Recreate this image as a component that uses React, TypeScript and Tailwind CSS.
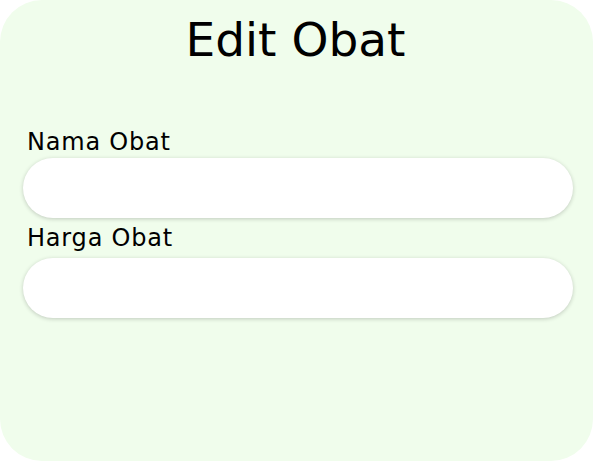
import React from "react";

export default function App() {
  return (
    <div className="w-[593px] h-[461px] bg-white" style={{ fontFamily: "'DejaVu Sans', sans-serif" }}>
      <div className="w-full h-full rounded-[42px] bg-[#f0fdec] px-[23px] pt-[14px]">
        {/* Judul */}
        <h1 className="text-center text-[47px] leading-[52px] font-normal text-black pr-[2px]">Edit Obat</h1>

        <form className="mt-[62px] flex flex-col">
          <label className="px-[4px] text-[24px] leading-[28px] tracking-[0.8px] text-black">Nama Obat</label>
          <input
            type="text"
            className="mt-[2px] h-[60px] w-[550px] rounded-full bg-white shadow-[0_1px_4px_rgba(0,0,0,0.2)] outline-none px-6"
          />
          <label className="mt-[6px] px-[4px] text-[24px] leading-[28px] tracking-[0.8px] text-black">Harga Obat</label>
          <input
            type="text"
            className="mt-[6px] h-[60px] w-[550px] rounded-full bg-white shadow-[0_1px_4px_rgba(0,0,0,0.2)] outline-none px-6"
          />
        </form>
      </div>
    </div>
  );
}
